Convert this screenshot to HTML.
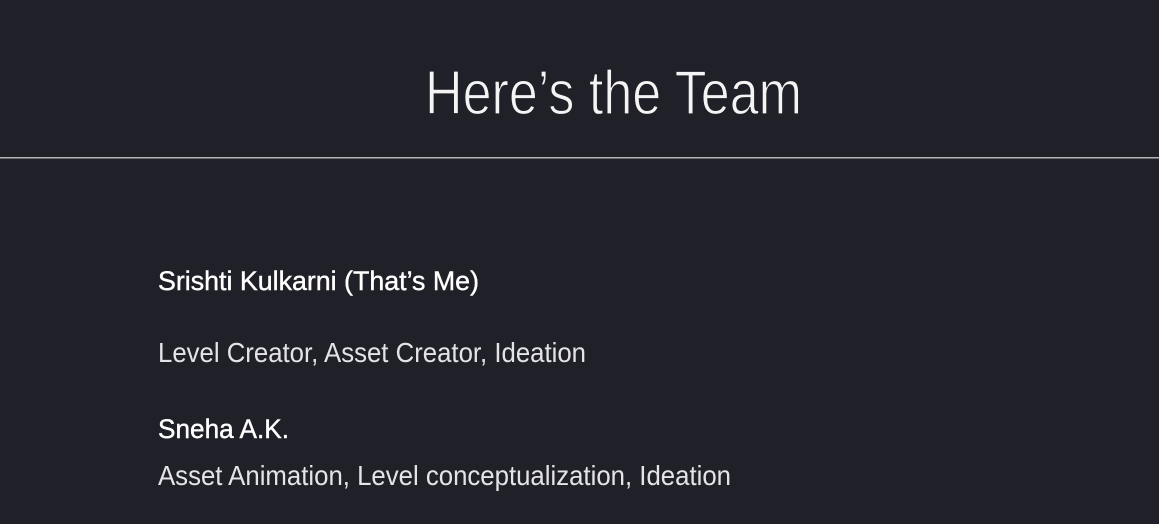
<!DOCTYPE html>
<html><head><meta charset="utf-8"><style>
html,body{margin:0;padding:0;background:#202028;width:1159px;height:524px;overflow:hidden}
svg{display:block}
text{font-family:"Liberation Sans","DejaVu Sans",sans-serif}
</style></head><body>
<svg width="1159" height="524" viewBox="0 0 1159 524">
<rect width="1159" height="524" fill="#202028"/>
<text x="425" y="114" font-size="62" fill="#f4f4f4" textLength="377" lengthAdjust="spacingAndGlyphs" stroke="#202028" stroke-width="1.2">Here’s the Team</text>
<rect x="0" y="157" width="1159" height="1.5" fill="#b4b4b8"/>
<text x="158" y="290" font-size="27" fill="#ffffff" textLength="321" lengthAdjust="spacingAndGlyphs" stroke="#ffffff" stroke-width="0.4">Srishti Kulkarni (That’s Me)</text>
<text x="158" y="362" font-size="28" fill="#e4e4e8" textLength="428" lengthAdjust="spacingAndGlyphs">Level Creator, Asset Creator, Ideation</text>
<text x="158" y="438" font-size="27" fill="#ffffff" textLength="131" lengthAdjust="spacingAndGlyphs" stroke="#ffffff" stroke-width="0.4">Sneha A.K.</text>
<text x="158" y="485" font-size="28" fill="#e4e4e8" textLength="573" lengthAdjust="spacingAndGlyphs">Asset Animation, Level conceptualization, Ideation</text>
</svg>
</body></html>
